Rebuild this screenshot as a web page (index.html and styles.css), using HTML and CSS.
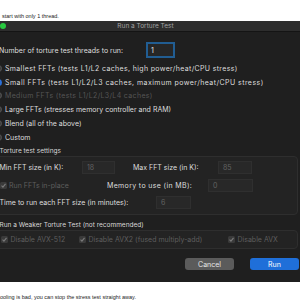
FILE: index.html
```html
<!DOCTYPE html>
<html lang="en">
<head>
    <meta charset="UTF-8">
    <meta name="viewport" content="width=device-width, initial-scale=1.0">
    <title>Run a Torture Test</title>
    <link rel="stylesheet" href="styles.css">
</head>
<body>
    <p class="page-text page-top">start with only 1 thread.</p>

    <div class="dialog">
        <div class="titlebar">
            <div class="lights">
                <span class="light red"></span>
                <span class="light yellow"></span>
                <span class="light green"></span>
            </div>
            <div class="title">Run a Torture Test</div>
            <div></div>
        </div>

        <div class="content">
            <div class="threads-row">
                <span class="label">Number of torture test threads to run:</span>
                <span class="field focus">1</span>
            </div>

            <div class="radios">
                <div class="radio-row wide"><span class="radio"></span>Smallest FFTs (tests L1/L2 caches, high power/heat/CPU stress)</div>
                <div class="radio-row wider"><span class="radio on"></span>Small FFTs (tests L1/L2/L3 caches, maximum power/heat/CPU stress)</div>
                <div class="radio-row wide disabled"><span class="radio"></span>Medium FFTs (tests L1/L2/L3/L4 caches)</div>
                <div class="radio-row"><span class="radio"></span>Large FFTs (stresses memory controller and RAM)</div>
                <div class="radio-row"><span class="radio"></span>Blend (all of the above)</div>
                <div class="radio-row"><span class="radio"></span>Custom</div>
            </div>

            <div class="group-title">Torture test settings</div>
            <div class="group settings">
                <div class="set-row">
                    <span class="label w-min">Min FFT size (in K):</span>
                    <span class="field w33">18</span>
                    <span class="label w-max">Max FFT size (in K):</span>
                    <span class="field w34">85</span>
                </div>
                <div class="set-row">
                    <span class="check-item w-inplace"><span class="check"><svg viewBox="0 0 10 10"><path d="M2.2 5.2 L4.2 7.3 L7.9 2.6"/></svg></span><span class="muted">Run FFTs in-place</span></span>
                    <span class="label w-mem wide">Memory to use (in MB):</span>
                    <span class="field w45">0</span>
                </div>
                <div class="set-row">
                    <span class="label w-time">Time to run each FFT size (in minutes):</span>
                    <span class="field w35">6</span>
                </div>
            </div>

            <div class="group-title weaker">Run a Weaker Torture Test (not recommended)</div>
            <div class="group checks">
                <span class="check-item w-avx512"><span class="check"><svg viewBox="0 0 10 10"><path d="M2.2 5.2 L4.2 7.3 L7.9 2.6"/></svg></span><span class="muted">Disable AVX-512</span></span>
                <span class="check-item w-avx2"><span class="check"><svg viewBox="0 0 10 10"><path d="M2.2 5.2 L4.2 7.3 L7.9 2.6"/></svg></span><span class="muted">Disable AVX2 (fused multiply-add)</span></span>
                <span class="check-item"><span class="check"><svg viewBox="0 0 10 10"><path d="M2.2 5.2 L4.2 7.3 L7.9 2.6"/></svg></span><span class="muted">Disable AVX</span></span>
            </div>

            <div class="buttons">
                <span class="btn">Cancel</span>
                <span class="btn primary">Run</span>
            </div>
        </div>
    </div>

    <p class="page-text page-bottom">ooling is bad, you can stop the stress test straight away.</p>
</body>
</html>
```

FILE: styles.css
```css
body {
    margin: 0;
    background-color: #ffffff;
    font-family: "Liberation Sans", Arial, sans-serif;
    overflow: hidden;
    width: 300px;
    height: 300px;
}

.page-text {
    margin: 0;
    color: #222222;
    font-size: 5.5px;
    line-height: 8px;
    white-space: nowrap;
}

.page-top {
    height: 21px;
    box-sizing: border-box;
    padding: 12px 0 0 2px;
}

.page-bottom {
    padding-top: 11px;
}

.dialog {
    margin-left: -40px;
    width: 371px;
    background-color: #1f1f1f;
    color: #dedede;
    font-family: Inter, "Liberation Sans", sans-serif;
    font-size: 7px;
}

.titlebar {
    height: 11px;
    box-sizing: border-box;
    display: grid;
    grid-template-columns: 1fr auto 1fr;
    align-items: center;
    background-color: #2d2d2d;
    border-bottom: 1px solid #141414;
}

.lights {
    display: flex;
    gap: 5px;
    padding-left: 18px;
}

.light {
    width: 6px;
    height: 6px;
    border-radius: 50%;
}

.red { background-color: #fe5f57; }
.yellow { background-color: #febc2e; }
.green { background-color: #28c840; }

.title {
    color: #a3a3a3;
    font-size: 6.5px;
}

.content {
    padding: 10px 32px 12px 36px;
}

.label {
    white-space: nowrap;
}

.wide {
    letter-spacing: 0.35px;
}

.wider {
    letter-spacing: 0.45px;
}

.threads-row {
    display: flex;
    align-items: center;
    height: 16px;
    padding-left: 3px;
}

.threads-row .label {
    width: 147px;
}

.field {
    height: 13px;
    box-sizing: border-box;
    display: flex;
    align-items: center;
    padding-left: 4px;
    background-color: #282828;
    border: 1px solid #2f2f2f;
    color: #626262;
}

.field.focus {
    width: 29px;
    height: 16px;
    border: 2px solid #215d92;
    background-color: #262626;
    color: #e6e6e6;
    padding-left: 3px;
}

.radios {
    margin-top: 3.5px;
}

.radio-row {
    height: 13.8px;
    display: flex;
    align-items: center;
    white-space: nowrap;
}

.radio-row.disabled {
    color: #555555;
}

.radio {
    width: 7px;
    height: 7px;
    box-sizing: border-box;
    border-radius: 50%;
    margin: 0 3.5px 0 -1.5px;
    background-color: #3c3c3c;
    border: 1px solid #555555;
    flex-shrink: 0;
}

.radio.on {
    background-color: #2a6fd8;
    border: 2px solid #2a6fd8;
    box-shadow: inset 0 0 0 1px #ffffff;
}

.group-title {
    height: 9px;
    line-height: 9px;
    margin-top: 3px;
    padding-left: 3.5px;
    font-size: 6.5px;
    color: #d8d8d8;
}

.group-title.weaker {
    margin-top: 5.5px;
}

.group {
    margin-left: -4px;
    margin-right: 1px;
    background-color: #232323;
    border: 1px solid #2e2e2e;
    border-radius: 4px;
    box-sizing: border-box;
}

.settings {
    display: flex;
    flex-direction: column;
    gap: 4.75px;
    padding: 3.5px 0 4.5px 6.5px;
    height: 59px;
}

.set-row {
    display: flex;
    align-items: center;
    height: 13px;
}

.w-min { width: 82.5px; }
.w-max { width: 85px; margin-left: 18px; }
.w-inplace { width: 107.5px; }
.w-mem { width: 101px; }
.w-time { width: 156.5px; }
.w33 { width: 33px; }
.w34 { width: 34px; }
.w35 { width: 35px; }
.w45 { width: 45px; }

.check-item {
    display: flex;
    align-items: center;
    white-space: nowrap;
}

.check {
    width: 7px;
    height: 7px;
    border-radius: 1.5px;
    background-color: #3a3a3a;
    margin-right: 2.5px;
    display: flex;
    flex-shrink: 0;
}

.check svg {
    width: 7px;
    height: 7px;
    fill: none;
    stroke: #7a7a7a;
    stroke-width: 1.6;
}

.muted {
    color: #5e5e5e;
}

.checks {
    height: 19.5px;
    display: flex;
    align-items: center;
    padding-left: 8px;
}

.w-avx512 { width: 78px; }
.w-avx2 { width: 149px; }

.buttons {
    display: flex;
    justify-content: flex-end;
    gap: 16px;
    margin-top: 9px;
}

.btn {
    width: 49px;
    height: 12px;
    border-radius: 3px;
    display: flex;
    align-items: center;
    justify-content: center;
    background-color: #5b5b5b;
    color: #e6e6e6;
    font-size: 7px;
}

.btn.primary {
    background-color: #1f6fd9;
    color: #ffffff;
}
```
